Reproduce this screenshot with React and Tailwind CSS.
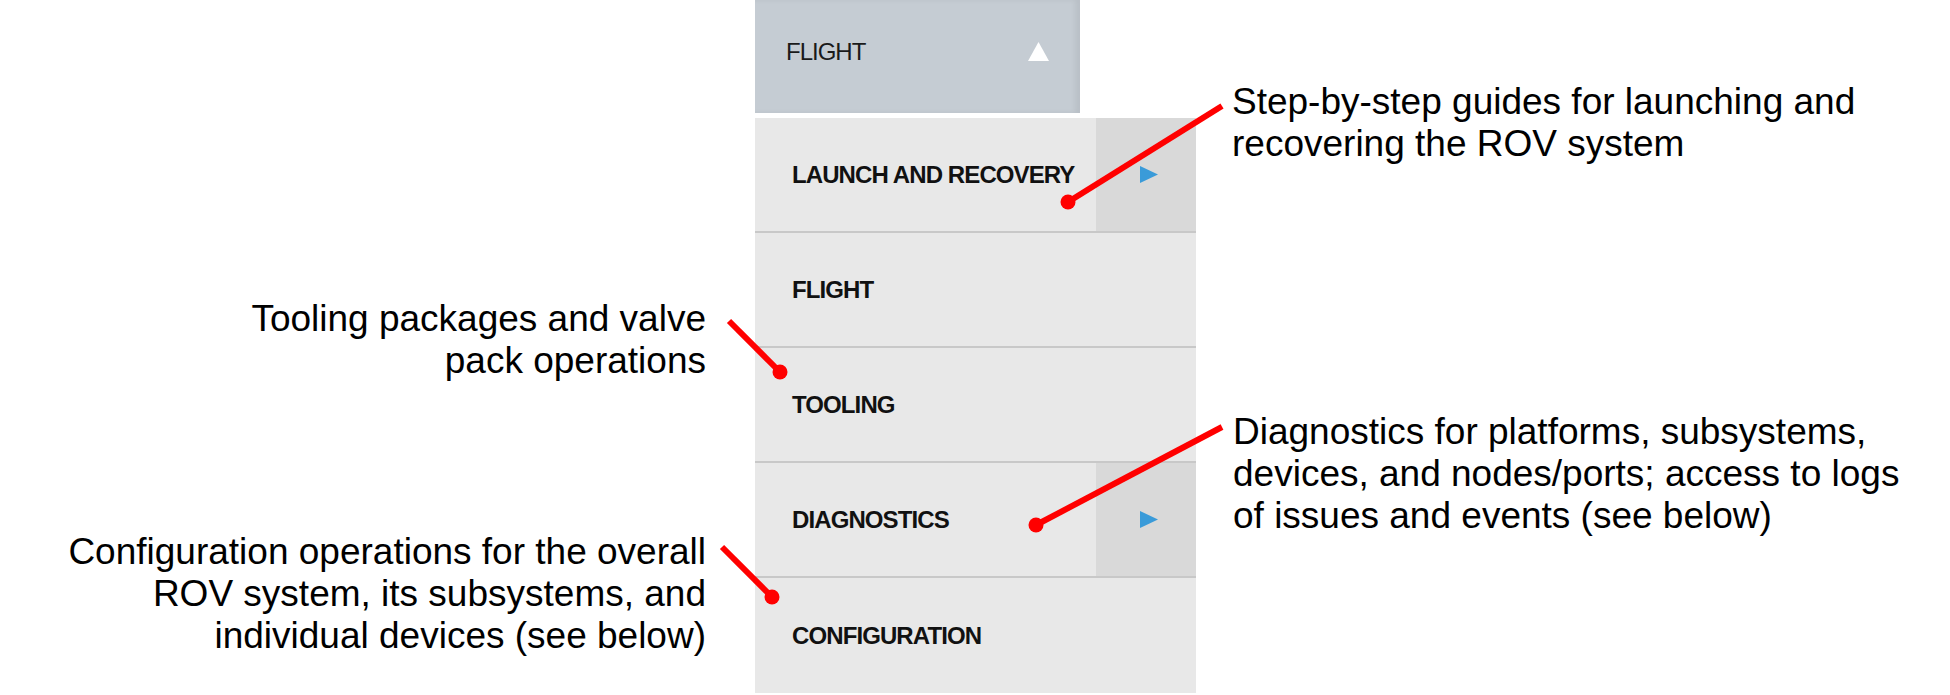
import React from "react";

const items = [
  { label: "LAUNCH AND RECOVERY", sub: true },
  { label: "FLIGHT" },
  { label: "TOOLING" },
  { label: "DIAGNOSTICS", sub: true },
  { label: "CONFIGURATION", last: true },
];

// leader lines: [x1, y1, x2, y2], dot drawn at the first point
const leaders = [
  [1068, 202, 1222, 106],
  [780, 372, 729, 321],
  [1036, 525, 1222, 427],
  [772, 597, 722, 547],
];

const MenuRow = ({ label, sub, last }) => (
  <div
    className={`flex h-[115px] bg-[#e8e8e8] ${
      last ? "h-[112px]" : "border-b-2 border-[#c8c8c8]"
    }`}
  >
    <div className="flex flex-1 items-center pl-[37px]">
      <span className="text-[24px] font-bold tracking-[-0.9px] text-[#111]">
        {label}
      </span>
    </div>
    {sub && (
      <div className="flex w-[100px] items-center justify-center bg-[#d9d9d9] pl-[6px]">
        <svg width="18" height="17" viewBox="0 0 18 17">
          <polygon points="0,0 18,8.5 0,17" fill="#3a9bd9" />
        </svg>
      </div>
    )}
  </div>
);

export default function App() {
  return (
    <div
      className="relative h-[695px] w-[1950px] overflow-hidden bg-white"
      style={{ fontFamily: '"Liberation Sans", Arial, sans-serif' }}
    >
      <div className="flex">
        {/* left notes */}
        <div className="w-[706px] text-right text-[37px] leading-[42px] text-black">
          <p className="mt-[298px]">
            Tooling packages and valve
            <br />
            pack operations
          </p>
          <p className="mt-[149px]">
            Configuration operations for the overall
            <br />
            ROV system, its subsystems, and
            <br />
            individual devices (see below)
          </p>
        </div>

        {/* menu */}
        <div className="ml-[49px] w-[441px]">
          <div className="flex h-[113px] w-[325px] items-center justify-between bg-[#c5ccd3] pb-[10px] pl-[31px] pr-[31px] shadow-[inset_-5px_0_5px_rgba(0,0,0,0.06)]">
            <span className="text-[24px] tracking-[-1px] text-[#1a1a1a]">
              FLIGHT
            </span>
            <svg width="21" height="19" viewBox="0 0 21 19">
              <polygon points="10.5,0 21,19 0,19" fill="#ffffff" />
            </svg>
          </div>
          <div className="mt-[5px]">
            {items.map((it, i) => (
              <MenuRow key={i} {...it} />
            ))}
          </div>
        </div>

        {/* right notes */}
        <div className="ml-[36px] text-[37px] leading-[42px] text-black">
          <p className="mt-[81px]">
            Step-by-step guides for launching and
            <br />
            recovering the ROV system
          </p>
          <p className="mt-[246px] pl-[1px]">
            Diagnostics for platforms, subsystems,
            <br />
            devices, and nodes/ports; access to logs
            <br />
            of issues and events (see below)
          </p>
        </div>
      </div>

      <svg
        className="pointer-events-none absolute inset-0"
        width="1950"
        height="695"
        viewBox="0 0 1950 695"
      >
        {leaders.map(([x1, y1, x2, y2], i) => (
          <g key={i}>
            <line
              x1={x1}
              y1={y1}
              x2={x2}
              y2={y2}
              stroke="#ff0000"
              strokeWidth="6"
            />
            <circle cx={x1} cy={y1} r="7.5" fill="#ff0000" />
          </g>
        ))}
      </svg>
    </div>
  );
}
